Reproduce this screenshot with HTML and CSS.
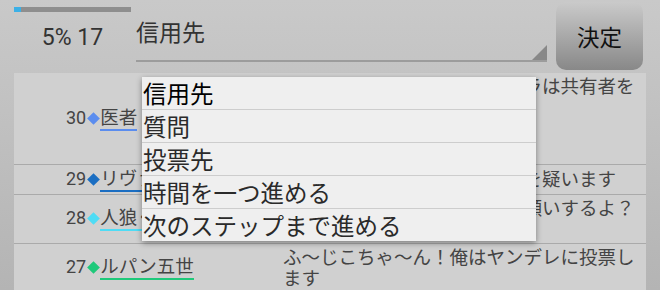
FILE: index.html
```html
<!DOCTYPE html>
<html lang="ja">
<head>
    <meta charset="UTF-8">
    <meta name="viewport" content="width=device-width, initial-scale=1.0">
    <title>投票</title>
    <link rel="stylesheet" href="styles.css">
</head>
<body>
    <div class="screen">
        <!-- top bar: progress, target picker, submit -->
        <header class="top">
            <div class="progress">
                <div class="bar"><div class="fill" style="width: 6%"></div></div>
                <div class="count">5% 17</div>
            </div>
            <div class="spinner">信用先</div>
            <button class="ok">決定</button>
        </header>

        <!-- chat log -->
        <ul class="log">
            <li class="row">
                <div class="who"><span class="no">30</span><i class="gem doctor"></i><span class="name doctor">医者</span></div>
                <p class="msg">霊能者の結果を見てからボクラは共有者を信じるよ。<br>村のみんなも<br>協力してね</p>
            </li>
            <li class="row">
                <div class="who"><span class="no">29</span><i class="gem levi"></i><span class="name levi">リヴァイ</span></div>
                <p class="msg">占いの結果からヤンデレさんを疑います</p>
            </li>
            <li class="row">
                <div class="who"><span class="no">28</span><i class="gem wolf"></i><span class="name wolf">人狼くん</span></div>
                <p class="msg">みんな今日の投票先は僕にお願いするよ？よろしくね</p>
            </li>
            <li class="row">
                <div class="who"><span class="no">27</span><i class="gem lupin"></i><span class="name lupin">ルパン五世</span></div>
                <p class="msg">ふ〜じこちゃ〜ん！俺はヤンデレに投票します</p>
            </li>
        </ul>

        <!-- open dropdown of the picker -->
        <ul class="menu">
            <li class="picked">信用先</li>
            <li>質問</li>
            <li>投票先</li>
            <li>時間を一つ進める</li>
            <li>次のステップまで進める</li>
        </ul>
    </div>
</body>
</html>
```

FILE: styles.css
```css
* {
    box-sizing: border-box;
}
body {
    margin: 0;
    font-family: Roboto, "Noto Sans CJK JP", sans-serif;
}
.screen {
    position: relative;
    width: 660px;
    height: 290px;
    overflow: hidden;
    background: linear-gradient(#c9c9c9, #b4b4b4);
}
.top {
    display: flex;
    height: 73px;
    padding-left: 14px;
}
.progress {
    width: 117px;
    padding-top: 7px;
}
.bar {
    height: 5px;
    background-color: #8e8e8e;
}
.fill {
    height: 100%;
    background-color: #3cb0e6;
}
.count {
    margin-top: 12px;
    text-align: center;
    font-size: 23px;
    line-height: 28px;
    color: #333;
}
.spinner {
    position: relative;
    width: 411px;
    height: 62px;
    margin-left: 5px;
    padding-top: 20px;
    border-bottom: 2px solid #9c9c9c;
    font-size: 23px;
    line-height: 28px;
    color: #333;
}
.spinner::after {
    content: "";
    position: absolute;
    right: 0;
    bottom: 0;
    border-left: 15px solid transparent;
    border-bottom: 15px solid #888;
}
.ok {
    width: 87px;
    height: 68px;
    margin: 2px 0 0 9px;
    padding: 0;
    border: none;
    border-radius: 10px;
    background: linear-gradient(#cacaca, #888);
    font-family: "Noto Sans CJK JP", sans-serif;
    font-size: 22.5px;
    color: #111;
}
.log {
    list-style: none;
    margin: 0 14px;
    padding: 0;
    min-height: 217px;
    background-color: #d0d0d0;
}
.row {
    display: grid;
    grid-template-columns: 217px 1fr;
    align-items: center;
    padding: 2px 8px 3px 52px;
    border-bottom: 1px solid #aaa;
}
.who {
    font-size: 18.5px;
    line-height: 21.5px;
    color: #444;
    white-space: nowrap;
}
.no {
    font-size: 18px;
}
.gem {
    display: inline-block;
    width: 9px;
    height: 9px;
    margin: 0 2.5px;
    transform: rotate(45deg);
    vertical-align: 1px;
}
.name {
    font-family: "Noto Sans CJK JP", sans-serif;
    border-bottom: 2px solid;
}
.msg {
    margin: 0;
    font-family: "Noto Sans CJK JP", sans-serif;
    font-size: 18.5px;
    line-height: 21.5px;
    color: #444;
}
.gem.doctor { background-color: #5b8def; }
.name.doctor { border-color: #5b8def; }
.gem.levi { background-color: #1b6ec2; }
.name.levi { border-color: #1b6ec2; }
.gem.wolf { background-color: #4fdcf5; }
.name.wolf { border-color: #4fdcf5; }
.gem.lupin { background-color: #1fc97a; }
.name.lupin { border-color: #1fc97a; }
.menu {
    position: absolute;
    left: 142px;
    top: 77px;
    width: 394px;
    margin: 0;
    padding: 0;
    list-style: none;
    background-color: #efefef;
    box-shadow: 0 2px 6px rgba(0, 0, 0, 0.4);
}
.menu li {
    height: 33px;
    padding-left: 1px;
    border-bottom: 1px solid #cdcdcd;
    font-family: "Noto Sans CJK JP", sans-serif;
    font-size: 23.5px;
    line-height: 32px;
    color: #2a2a2a;
}
.menu li:last-child {
    height: 32px;
    border-bottom: none;
}
.menu li.picked {
    color: #000;
}
```
